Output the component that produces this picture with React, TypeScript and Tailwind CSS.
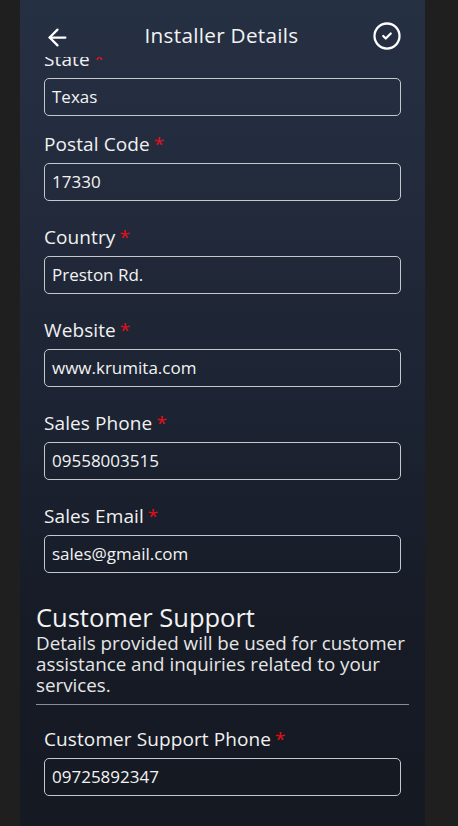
import { ArrowLeft, CircleCheck } from "lucide-react";

const font = { fontFamily: '"Open Sans", "Liberation Sans", sans-serif' };

type FieldProps = { label: string; value: string; className?: string };

function Field({ label, value, className = "" }: FieldProps) {
  return (
    <div className={className}>
      <label className="block text-[19px] leading-[22px] text-[#f1f1f1] tracking-[0.1px]">
        {label}
        <span className="ml-[4px] text-[#e3101b]">*</span>
      </label>
      <div className="mt-[8px] h-[38px] rounded-[5px] border border-[#c4c7cc] px-[7px] flex items-center text-[17px] text-[#f3f3f3]">
        {value}
      </div>
    </div>
  );
}

export default function App() {
  return (
    <div className="min-h-screen w-full bg-[#1f1f1f] flex justify-center" style={font}>
      <div className="w-[405px] h-[826px] mr-[13px] overflow-hidden flex flex-col bg-[linear-gradient(to_bottom,#263043_0%,#242d3f_15%,#1c2332_50%,#161b26_75%,#141922_100%)]">
        {/* Header */}
        <div className="relative z-10 h-[57px] shrink-0 flex items-end pb-[6px] px-[24px]">
          <ArrowLeft className="h-[27px] w-[27px] text-white" strokeWidth={2} />
          <h1 className="flex-1 text-center text-[20.7px] text-[#f3f3f3] tracking-[0.3px]">
            Installer Details
          </h1>
          <CircleCheck className="h-[30px] w-[30px] text-white mr-[-1px]" strokeWidth={1.8} />
        </div>

        {/* Scrolled form */}
        <div className="flex-1 overflow-hidden">
          <div className="px-[24px]">
            <Field label="State" value="Texas" className="mt-[-9px]" />
            <Field label="Postal Code" value="17330" className="mt-[17px]" />
            <Field label="Country" value="Preston Rd." className="mt-[25px]" />
            <Field label="Website" value="www.krumita.com" className="mt-[25px]" />
            <Field label="Sales Phone" value="09558003515" className="mt-[25px]" />
            <Field label="Sales Email" value="sales@gmail.com" className="mt-[25px]" />
          </div>

          <div className="px-[16px] mt-[29px]">
            <h2 className="text-[25.5px] leading-[31px] text-[#f3f3f3]">Customer Support</h2>
            <p className="text-[18.8px] leading-[21px] text-[#e6e6e6]">
              Details provided will be used for customer assistance and inquiries related to your
              services.
            </p>
            <div className="mt-[8px] h-px bg-[#8b8e94]" />
          </div>

          <div className="px-[24px] mt-[23px]">
            <Field label="Customer Support Phone" value="09725892347" />
          </div>
        </div>
      </div>
    </div>
  );
}
